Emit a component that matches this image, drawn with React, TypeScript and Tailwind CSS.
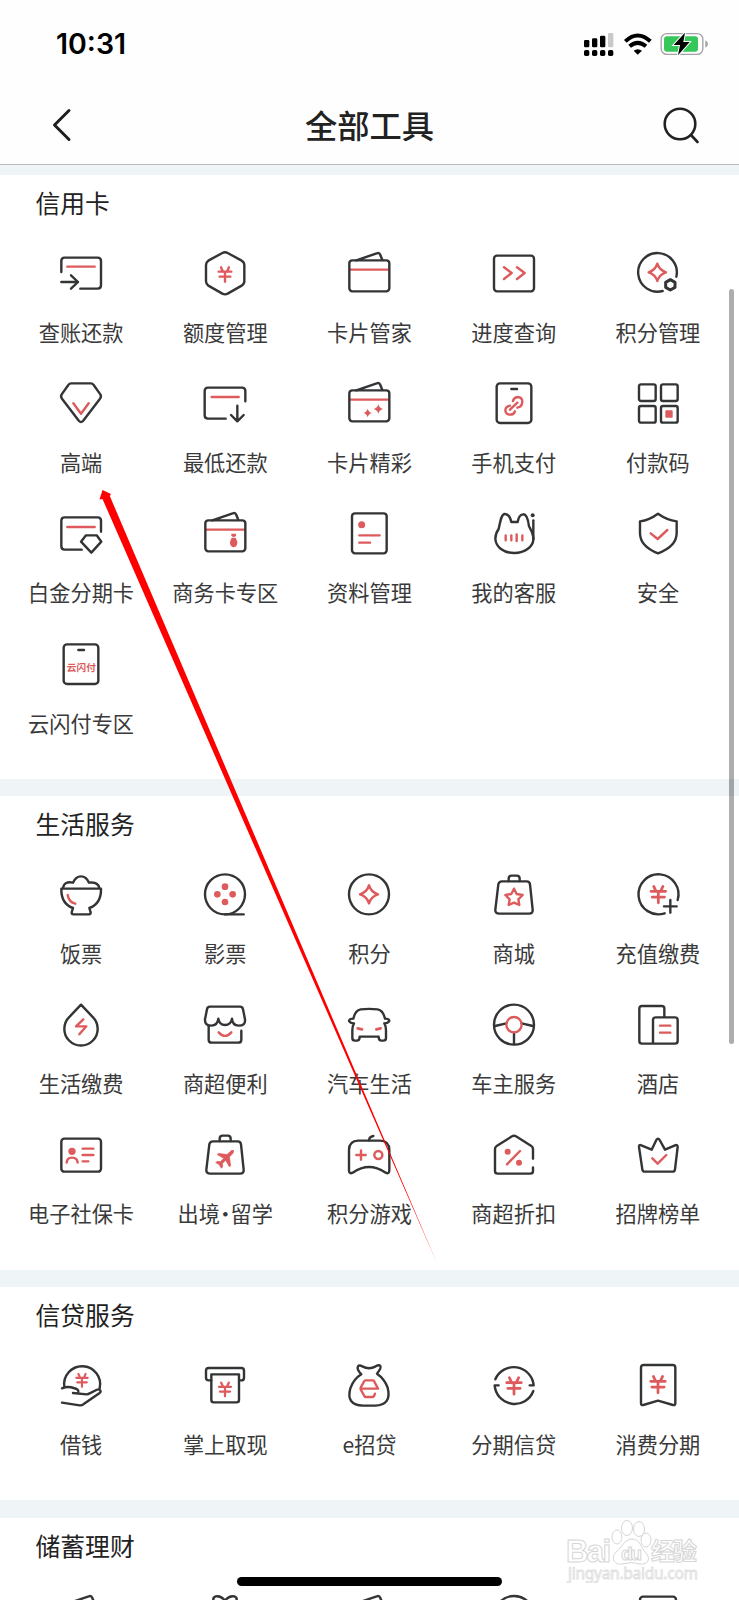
import type { ReactNode } from "react";

const RED = "#dd5b5d";

type Tool = { label: string; icon: ReactNode };

// Every tool icon is drawn on a 132 unit grid.
function Icon({ children }: { children: ReactNode }) {
  return (
    <svg
      viewBox="0 0 132 132"
      className="block h-11 w-11 overflow-visible"
      fill="none"
      stroke="#333436"
      strokeWidth={7.2}
      strokeLinecap="round"
      strokeLinejoin="round"
    >
      {children}
    </svg>
  );
}

function Yen({ x, y, s = 1 }: { x: number; y: number; s?: number }) {
  return (
    <path
      transform={`translate(${x} ${y}) scale(${s})`}
      stroke={RED}
      d="M-12 1 L-6 14 M12 1 L6 14 M-19 14H19 M-16 29H16 M0 15V44"
    />
  );
}

function Sparkle({ x, y, r }: { x: number; y: number; r: number }) {
  return (
    <path
      transform={`translate(${x} ${y}) scale(${r / 28})`}
      stroke={RED}
      strokeWidth={7.5}
      d="M0 -27 Q6 -7 27 0 Q6 7 0 27 Q-6 7 -27 0 Q-6 -7 0 -27Z"
    />
  );
}

function Star4({ x, y, r }: { x: number; y: number; r: number }) {
  return (
    <path
      transform={`translate(${x} ${y}) scale(${r})`}
      fill={RED}
      stroke="none"
      d="M0 -1 Q.2 -.2 1 0 Q.2 .2 0 1 Q-.2 .2 -1 0 Q-.2 -.2 0 -1Z"
    />
  );
}

function Wallet({ children }: { children?: ReactNode }) {
  return (
    <Icon>
      <path fill="#54585c" d="M28 28 L58 17 L48 28Z" stroke="none" />
      <path d="M28 28 L89 7 Q97 4 100 12 L106 27" />
      <path d="M10 56H122" stroke={RED} />
      <rect x="7" y="28" width="120" height="93" rx="9" />
      {children}
    </Icon>
  );
}

function Phone({ children }: { children: ReactNode }) {
  return (
    <Icon>
      <rect x="14" y="7" width="104" height="119" rx="10" />
      <path d="M58 24H75" />
      {children}
    </Icon>
  );
}

function Bag({ children }: { children: ReactNode }) {
  return (
    <Icon>
      <path d="M50 27 V20 Q50 11 59 11 H74 Q83 11 83 20 V27" />
      <path d="M30 28 H104 Q113 28 114 37 L122 113 Q123 125 111 125 H22 Q9 125 10 113 L19 37 Q21 28 30 28Z" />
      {children}
    </Icon>
  );
}

const creditCard: Tool[] = [
  {
    label: "查账还款",
    icon: (
      <Icon>
        <path d="M7 63 V30 Q7 20 17 20 H116 Q126 20 126 30 V103 Q126 113 116 113 H64" />
        <path d="M25 47H107" stroke={RED} />
        <path d="M7 93H57 M36 73 L57 93 L36 113" />
      </Icon>
    ),
  },
  {
    label: "额度管理",
    icon: (
      <Icon>
        <path d="M58 6 Q66 1 74 6 L116 29 Q124 34 124 42 V91 Q124 99 116 104 L74 128 Q66 132 58 128 L16 104 Q9 99 9 91 V42 Q9 34 16 29Z" />
        <Yen x={66} y={48} />
      </Icon>
    ),
  },
  { label: "卡片管家", icon: <Wallet /> },
  {
    label: "进度查询",
    icon: (
      <Icon>
        <rect x="6" y="14" width="120" height="107" rx="9" />
        <path d="M36 49 L59 66 L36 84 M75 49 L98 66 L75 84" stroke={RED} />
      </Icon>
    ),
  },
  {
    label: "积分管理",
    icon: (
      <Icon>
        <path d="M121 77 A58 58 0 1 0 80 120" />
        <Sparkle x={64} y={64} r={27} />
        <path d="M103 86 L117 94 V109 L103 117 L89 109 V94Z" strokeWidth={9} />
      </Icon>
    ),
  },
  {
    label: "高端",
    icon: (
      <Icon>
        <path d="M37 7H95 Q101 7 104 12 L124 40 Q128 47 123 53 L72 120 Q66 126 60 120 L9 53 Q4 47 8 40 L28 12 Q31 7 37 7Z" />
        <path d="M43 67 L66 98 L89 67" stroke={RED} />
      </Icon>
    ),
  },
  {
    label: "最低还款",
    icon: (
      <Icon>
        <path d="M127 61 V30 Q127 20 117 20 H15 Q5 20 5 30 V103 Q5 113 15 113 H68" />
        <path d="M26 48H107" stroke={RED} />
        <path d="M103 74V121 M84 102 L103 121 L122 102" />
      </Icon>
    ),
  },
  {
    label: "卡片精彩",
    icon: (
      <Wallet>
        <Star4 x={62} y={96} r={13} />
        <Star4 x={94} y={84} r={14} />
      </Wallet>
    ),
  },
  {
    label: "手机支付",
    icon: (
      <Phone>
        <path
          stroke={RED}
          d="M63 60 Q65 50 77 48 Q91 49 91 62 Q90 78 76 80 M54 74 Q40 76 40 89 Q42 101 54 101 Q66 101 69 91 M54 86 L76 65"
        />
      </Phone>
    ),
  },
  {
    label: "付款码",
    icon: (
      <Icon>
        <rect x="9" y="10" width="50" height="50" rx="6" />
        <rect x="75" y="10" width="50" height="50" rx="6" />
        <rect x="9" y="75" width="50" height="50" rx="6" />
        <rect x="75" y="75" width="50" height="50" rx="6" />
        <rect x="88" y="88" width="22" height="22" rx="2" fill={RED} stroke="none" />
      </Icon>
    ),
  },
  {
    label: "白金分期卡",
    icon: (
      <Icon>
        <path d="M126 62 V29 Q126 19 116 19 H17 Q7 19 7 29 V106 Q7 116 17 116 H68" />
        <path d="M25 48H107" stroke={RED} />
        <path d="M81 73H113 L127 92 L97 125 L66 92Z" />
      </Icon>
    ),
  },
  {
    label: "商务卡专区",
    icon: (
      <Wallet>
        <path fill={RED} stroke="none" d="M85 68H99V76H96L103 92Q104 106 92 109Q80 106 81 92L88 76H85Z" />
        <path stroke="#fff" strokeWidth={3} d="M84 79H100" />
      </Wallet>
    ),
  },
  {
    label: "资料管理",
    icon: (
      <Icon>
        <rect x="15" y="7" width="104" height="120" rx="9" />
        <circle cx="44" cy="41" r="10.5" fill={RED} stroke="none" />
        <path d="M37 73H98 M37 95H69" stroke={RED} />
      </Icon>
    ),
  },
  {
    label: "我的客服",
    icon: (
      <Icon>
        <path d="M58 33 C54 16 46 8 37 9 C27 12 25 32 20 54 C14 62 10 70 10 84 C12 108 34 126 67 126 C100 126 123 106 124 86 C125 68 116 56 111 46 C108 22 102 9 93 10 C84 11 79 20 77 33Z" />
        <path d="M124 84 V28" />
        <circle cx="122" cy="13" r="6" fill="#333436" stroke="none" />
        <path d="M41 73V88 M58 73V88 M74 70V90 M91 73V88" stroke={RED} />
      </Icon>
    ),
  },
  {
    label: "安全",
    icon: (
      <Icon>
        <path d="M66 8 Q40 27 12 31 V66 Q12 106 66 127 Q122 106 122 66 V31 Q93 27 66 8Z" />
        <path d="M44 67 L65 84 L94 57" stroke={RED} />
      </Icon>
    ),
  },
  {
    label: "云闪付专区",
    icon: (
      <Phone>
        <text
          x="67"
          y="87"
          textAnchor="middle"
          fontSize="29"
          fontWeight="700"
          fontFamily="'Noto Sans CJK SC', sans-serif"
          fill={RED}
          stroke="none"
        >
          云闪付
        </text>
      </Phone>
    ),
  },
];

const life: Tool[] = [
  {
    label: "饭票",
    icon: (
      <Icon>
        <path d="M7 50H126 Q127 95 91 108 L95 121 Q95 127 90 127 H43 Q38 127 38 121 L42 108 Q6 95 7 50Z" />
        <path d="M12 48 Q16 26 42 32 Q50 13 66 13 Q82 13 90 32 Q117 28 121 48" />
        <path d="M26 69 Q30 91 49 95" stroke={RED} />
      </Icon>
    ),
  },
  {
    label: "影票",
    icon: (
      <Icon>
        <circle cx="66" cy="67" r="60" />
        <path d="M66 127H122" />
        <g fill={RED} stroke="none">
          <circle cx="66" cy="44" r="10" />
          <circle cx="66" cy="90" r="10" />
          <circle cx="43" cy="67" r="10" />
          <circle cx="89" cy="67" r="10" />
        </g>
      </Icon>
    ),
  },
  {
    label: "积分",
    icon: (
      <Icon>
        <circle cx="66" cy="67" r="60" />
        <Sparkle x={66} y={67} r={28} />
      </Icon>
    ),
  },
  {
    label: "商城",
    icon: (
      <Bag>
        <path
          stroke={RED}
          d="M66 50 L74 66 L92 69 L79 82 L82 99 L66 92 L50 99 L53 82 L40 69 L58 66Z"
        />
      </Bag>
    ),
  },
  {
    label: "充值缴费",
    icon: (
      <Icon>
        <path d="M125 84 A60 60 0 1 0 86 124" />
        <Yen x={67} y={42} s={1.15} />
        <path d="M103 84V122 M84 103H122" />
      </Icon>
    ),
  },
  {
    label: "生活缴费",
    icon: (
      <Icon>
        <path d="M66 8 L100 44 A50 50 0 1 1 32 44Z" />
        <path d="M73 52 L51 73 H82 L61 97" stroke={RED} />
      </Icon>
    ),
  },
  {
    label: "商超便利",
    icon: (
      <Icon>
        <path d="M21 14H111 Q119 14 120 22 L126 52 Q128 71 107 71 Q88 70 87 50 Q84 69 66 69 Q49 69 46 50 Q44 70 25 71 Q5 71 6 52 L12 22 Q13 14 21 14Z" />
        <path d="M17 71 V113 Q17 122 26 122 H106 Q115 122 115 113 V86" />
        <path d="M47 91 Q66 112 85 91" stroke={RED} />
      </Icon>
    ),
  },
  {
    label: "汽车生活",
    icon: (
      <Icon>
        <path d="M38 104 H95 Q95 116 104 116 H109 Q117 116 117 108 V85 Q117 72 112 64 Q123 64 127 57 Q127 50 114 50 Q108 24 92 22 Q66 19 41 22 Q25 24 19 50 Q6 50 6 57 Q10 64 21 64 Q16 72 16 85 V108 Q16 116 24 116 H29 Q38 116 38 104Z" />
        <path d="M32 79 L45 82 M101 79 L88 82" stroke={RED} strokeWidth={8} />
      </Icon>
    ),
  },
  {
    label: "车主服务",
    icon: (
      <Icon>
        <circle cx="66" cy="68" r="60" />
        <path d="M43 64 L9 72 M89 64 L123 72 M66 92V126" />
        <circle cx="66" cy="68" r="23" stroke={RED} />
      </Icon>
    ),
  },
  {
    label: "酒店",
    icon: (
      <Icon>
        <path d="M85 44 V19 Q85 12 77 12H18 Q10 12 10 20 V117 Q10 125 18 125 H117 Q125 125 125 117 V54 Q125 46 117 46 H59 Q51 46 51 54 V125" />
        <path d="M72 71H103 M72 92H103" stroke={RED} />
      </Icon>
    ),
  },
  {
    label: "电子社保卡",
    icon: (
      <Icon>
        <rect x="7" y="20" width="119" height="99" rx="9" />
        <circle cx="39" cy="58" r="11" fill={RED} stroke="none" />
        <path d="M23 92 Q24 77 39 77 Q55 77 56 92 M71 50H103 M71 69H103 M71 88H88" stroke={RED} />
      </Icon>
    ),
  },
  {
    label: "出境·留学",
    icon: (
      <Bag>
        <path
          transform="translate(68 79) rotate(45)"
          fill={RED}
          stroke={RED}
          strokeWidth={2}
          d="M0 -33 Q5 -32 5 -23 V-11 L26 5 V10 L4 4 V18 L12 25 V30 L0 27 L-12 30 V25 L-4 18 V4 L-26 10 V5 L-5 -11 V-23 Q-5 -32 0 -33Z"
        />
      </Bag>
    ),
  },
  {
    label: "积分游戏",
    icon: (
      <Icon>
        <path d="M34 26 H99 Q127 27 127 54 V116 Q126 127 116 122 Q90 105 66 105 Q43 105 17 122 Q7 127 6 116 V54 Q6 27 34 26Z" />
        <path d="M66 25 Q67 14 79 12" />
        <path d="M42 55V83 M28 69H56" stroke={RED} />
        <circle cx="94" cy="69" r="12" stroke={RED} strokeWidth={7.5} />
      </Icon>
    ),
  },
  {
    label: "商超折扣",
    icon: (
      <Icon>
        <path d="M123 80 V51 Q123 45 118 42 L72 13 Q66 9 60 13 L14 42 Q9 45 9 51 V117 Q9 125 17 125 H115 Q123 125 123 117 V106" />
        <path d="M84 57 L45 97" stroke={RED} />
        <circle cx="47" cy="59" r="9" fill={RED} stroke="none" />
        <circle cx="81" cy="92" r="9" fill={RED} stroke="none" />
      </Icon>
    ),
  },
  {
    label: "招牌榜单",
    icon: (
      <Icon>
        <path d="M16 40 L47 53 L61 24 Q66 16 71 24 L87 53 L117 40 Q125 37 125 45 L117 112 Q116 119 110 119 H26 Q20 119 19 112 L9 45 Q8 37 16 40Z" />
        <path d="M49 79 L65 95 L91 69" stroke={RED} />
      </Icon>
    ),
  },
];

const loan: Tool[] = [
  {
    label: "借钱",
    icon: (
      <Icon>
        <path d="M16 72 A54 54 0 1 1 122 76" />
        <Yen x={69} y={32} s={0.9} />
        <path d="M9 76 Q26 69 44 75 Q63 79 57 90 M42 90 L83 94 Q88 94 92 91 L112 81 Q122 76 125 85 Q125 88 121 91 L73 124 Q68 128 62 127 L9 119" />
      </Icon>
    ),
  },
  {
    label: "掌上取现",
    icon: (
      <Icon>
        <path d="M25 52 H17 Q9 52 9 44 V23 Q9 15 17 15 H115 Q123 15 123 23 V44 Q123 52 115 52 H108" />
        <path d="M25 34 H108 V111 Q108 118 101 118 H32 Q25 118 25 111Z" />
        <Yen x={66} y={58} s={0.95} />
      </Icon>
    ),
  },
  {
    label: "e招贷",
    icon: (
      <Icon>
        <path d="M43 34 Q28 18 33 10 Q37 5 46 10 Q66 21 86 10 Q96 4 100 9 Q104 14 90 32 Q113 48 122 74 Q135 126 84 128 H48 Q-4 126 10 76 Q20 48 43 34Z" />
        <path d="M42 77H93 L81 54Q80 52 78 52H56Q54 52 52 54L41 74Q40 77 41 79L52 99Q54 102 56 102H77Q79 102 81 99L84 92" stroke={RED} />
      </Icon>
    ),
  },
  {
    label: "分期信贷",
    icon: (
      <Icon>
        <path d="M10 49 A60 60 0 0 1 125 67 H113 M124 84 A60 60 0 0 1 8 67 H20" />
        <Yen x={66} y={43} s={1.15} />
      </Icon>
    ),
  },
  {
    label: "消费分期",
    icon: (
      <Icon>
        <path d="M23 6 H110 Q118 6 118 14 V120 Q118 128 111 126 L66 113 L22 126 Q15 128 15 120 V14 Q15 6 23 6Z" />
        <Yen x={66} y={39} s={1.15} />
      </Icon>
    ),
  },
];

// Only the tops of these show above the fold.
const savings: ReactNode[] = [
  <Wallet key="card" />,
  <Icon key="gift">
    <path d="M66 20 Q54 4 38 7 Q28 10 32 24 M66 20 Q78 4 94 7 Q104 10 100 24" />
  </Icon>,
  <Wallet key="wallet" />,
  <Icon key="coin">
    <circle cx="66" cy="66" r="60" />
  </Icon>,
  <Icon key="bill">
    <rect x="12" y="8" width="108" height="115" rx="9" />
  </Icon>,
];

function Heading({ children }: { children: ReactNode }) {
  return <h2 className="flex h-[55px] items-center pl-[35.5px] text-[24.8px] leading-none text-[#222]">{children}</h2>;
}

function Section({ title, tools, className }: { title: string; tools: Tool[]; className: string }) {
  return (
    <section className={`shrink-0 bg-white ${className}`}>
      <Heading>{title}</Heading>
      <div className="grid grid-cols-5 gap-y-[32.2px] px-[9px] pt-[21px]">
        {tools.map((tool) => (
          <div key={tool.label} className="flex flex-col items-center">
            {tool.icon}
            <span className="mt-[21px] mb-px h-8 text-[21.2px] leading-8 whitespace-nowrap text-[#3a3a3a] [font-feature-settings:'halt']">
              {tool.label}
            </span>
          </div>
        ))}
      </div>
    </section>
  );
}

function StatusIcons() {
  return (
    <svg viewBox="0 0 375 69" className="h-[23px] w-[125px]">
      <rect x="3" y="21" width="16" height="22" rx="4" />
      <rect x="27" y="16" width="16" height="27" rx="4" />
      <rect x="51" y="8" width="16" height="35" rx="4" />
      <rect x="75" y="0" width="16" height="43" rx="4" fill="#c9c9c9" />
      <rect x="3" y="51" width="16" height="18" rx="5" />
      <rect x="27" y="51" width="16" height="18" rx="5" />
      <rect x="51" y="51" width="16" height="18" rx="5" />
      <rect x="75" y="51" width="16" height="18" rx="5" />
      <g fill="none" stroke="#000" strokeWidth="12">
        <path d="M127 25 Q164 -10 202 25" />
        <path d="M140 40 Q164 19 189 40" />
      </g>
      <path d="M152 53 Q164 44 177 53 L164 65Z" />
      <rect x="234.500" y="2" width="125" height="62" rx="17" fill="#fff" stroke="#a3a3a3" strokeWidth="4" />
      <rect x="243" y="10" width="102" height="46" rx="9" fill="#35c759" />
      <path d="M367 22 Q375 26 375 33 Q375 40 367 44Z" fill="#a3a3a3" />
      <path
        d="M306 -1 L272 36 H291 L285 67 L320 27 H301Z"
        fill="#000"
        stroke="#fff"
        strokeWidth="6"
        paintOrder="stroke"
      />
    </svg>
  );
}

function Watermark() {
  return (
    <svg
      viewBox="0 0 140 66"
      className="absolute top-[1517px] left-[564px] h-[66px] w-[140px]"
      fill="#fff"
      stroke="#d6d6d6"
      strokeWidth="1"
    >
      <g fontFamily="'Liberation Sans', sans-serif" fontWeight="bold">
        <text x="2" y="45" fontSize="31" textLength="45">
          Bai
        </text>
        <ellipse cx="53" cy="20" rx="5" ry="7" />
        <ellipse cx="63" cy="11" rx="5.500" ry="7.500" />
        <ellipse cx="75" cy="12" rx="5.500" ry="7.500" />
        <ellipse cx="82" cy="23" rx="5" ry="7" />
        <path d="M68 22 C60 22 58 31 52 35 C46 42 51 48 58 47 Q68 44 76 47 C84 48 87 42 82 36 C77 31 76 22 68 22Z" />
        <text x="57" y="43" fontSize="19" textLength="21">
          du
        </text>
      </g>
      <text x="87" y="43" fontSize="24" fontWeight="bold" textLength="46" fontFamily="'Noto Sans CJK SC', sans-serif">
        经验
      </text>
      <text
        x="4"
        y="62"
        fontSize="15.500"
        textLength="130"
        fontFamily="'Noto Sans', sans-serif"
        fill="#fbfbfb"
        stroke="#dedede"
        strokeWidth="0.800"
      >
        jingyan.baidu.com
      </text>
    </svg>
  );
}

export default function App() {
  return (
    <div className="relative flex h-[1600px] w-full flex-col overflow-hidden bg-[#eff4f7] font-['Noto_Sans_CJK_SC',sans-serif] font-normal">
      <header className="h-[165px] shrink-0 border-b-[1.500px] border-[#bcbcbc] bg-[#fefefe]">
        <div className="flex h-[89px] items-center justify-between pr-[31px] pl-[56px]">
          <span className="font-['Inter'] text-[28.5px] font-semibold text-black">10:31</span>
          <StatusIcons />
        </div>
        <div className="grid h-[72px] grid-cols-[1fr_auto_1fr] items-center px-[39px]">
          <svg viewBox="0 0 22 34" className="ml-3 h-[34px] w-[22px]" fill="none" stroke="#1f1f1f" strokeWidth="3" strokeLinecap="round" strokeLinejoin="round">
            <path d="M18 2.500 L3.500 17 L18 31.500" />
          </svg>
          <h1 className="pb-0.5 text-[32.3px] font-medium leading-none text-[#222]">全部工具</h1>
          <svg viewBox="0 0 37 37" className="h-[37px] w-[37px] justify-self-end" fill="none" stroke="#222" strokeWidth="2.600" strokeLinecap="round">
            <circle cx="17" cy="17" r="15.300" />
            <path d="M28 28 L34.500 35" />
          </svg>
        </div>
      </header>

      <Section title="信用卡" tools={creditCard} className="mt-2.5 h-[604px]" />
      <Section title="生活服务" tools={life} className="mt-[17px] h-[474px]" />
      <Section title="信贷服务" tools={loan} className="mt-[17px] h-[213px]" />

      <section className="mt-[18px] h-[82px] shrink-0 overflow-hidden bg-white">
        <Heading>储蓄理财</Heading>
        <div className="grid grid-cols-5 justify-items-center px-[9px] pt-[21px]">{savings}</div>
      </section>

      <Watermark />

      {/* scroll thumb */}
      <div className="absolute top-[289px] right-[5px] h-[755px] w-[5.500px] rounded-full bg-black/32" />

      {/* home indicator */}
      <div className="absolute top-[1577px] left-[237px] h-[9px] w-[265px] rounded-full bg-black" />

      {/* pointer to 高端 */}
      <svg viewBox="0 0 739 1600" className="absolute inset-0 h-full w-full" fill="#fe0000">
        <path d="M102.500 490 L111 494 L109.800 496 L436.500 1262 L102.500 499 L99.500 499.500Z" />
      </svg>
    </div>
  );
}
